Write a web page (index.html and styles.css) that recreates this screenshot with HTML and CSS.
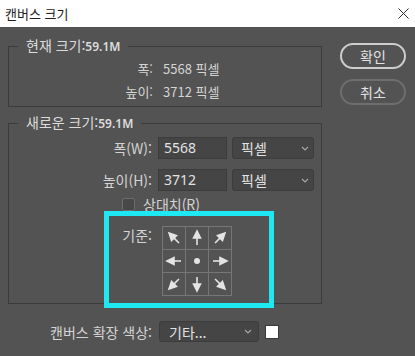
FILE: index.html
```html
<!DOCTYPE html>
<html lang="ko">
<head>
    <meta charset="UTF-8">
    <title>캔버스 크기</title>
    <link rel="stylesheet" href="styles.css">
</head>
<body>
    <svg class="defs" width="0" height="0">
        <defs>
            <g id="arrow">
                <line x1="11" y1="18" x2="11" y2="9" />
                <polygon points="11,4 7.5,11 14.5,11" />
            </g>
            <path id="chev" d="M1 1 L4 4 L7 1" />
        </defs>
    </svg>

    <!-- Title Bar -->
    <div class="titlebar">
        <span class="title">캔버스 크기</span>
        <svg class="close" width="11" height="11" viewBox="0 0 11 11">
            <path d="M0.5 0.5 L10.5 10.5 M10.5 0.5 L0.5 10.5" />
        </svg>
    </div>

    <!-- Dialog Body -->
    <div class="dialog">
        <div class="main">
            <fieldset class="group current">
                <legend>현재 크기:<span class="num">59.1M</span></legend>
                <div class="info-row">
                    <span class="label">폭:</span>
                    <span class="value">5568 픽셀</span>
                </div>
                <div class="info-row">
                    <span class="label">높이:</span>
                    <span class="value">3712 픽셀</span>
                </div>
            </fieldset>

            <fieldset class="group new-size">
                <legend>새로운 크기:<span class="num">59.1M</span></legend>
                <div class="field-row">
                    <span class="label">폭(W):</span>
                    <div class="input">5568</div>
                    <div class="select unit">
                        <span>픽셀</span>
                        <svg width="8" height="5" viewBox="0 0 8 5"><use href="#chev" /></svg>
                    </div>
                </div>
                <div class="field-row">
                    <span class="label">높이(H):</span>
                    <div class="input">3712</div>
                    <div class="select unit">
                        <span>픽셀</span>
                        <svg width="8" height="5" viewBox="0 0 8 5"><use href="#chev" /></svg>
                    </div>
                </div>
                <div class="check-row">
                    <span class="checkbox"></span>
                    <span>상대치(R)</span>
                </div>
                <div class="anchor-row">
                    <span class="label">기준:</span>
                    <div class="anchor-grid">
                        <div class="cell"><svg viewBox="0 0 22 22"><use href="#arrow" transform="rotate(-45 11 11)" /></svg></div>
                        <div class="cell"><svg viewBox="0 0 22 22"><use href="#arrow" /></svg></div>
                        <div class="cell"><svg viewBox="0 0 22 22"><use href="#arrow" transform="rotate(45 11 11)" /></svg></div>
                        <div class="cell"><svg viewBox="0 0 22 22"><use href="#arrow" transform="rotate(-90 11 11)" /></svg></div>
                        <div class="cell"><svg viewBox="0 0 22 22"><circle cx="11" cy="11" r="3" /></svg></div>
                        <div class="cell"><svg viewBox="0 0 22 22"><use href="#arrow" transform="rotate(90 11 11)" /></svg></div>
                        <div class="cell"><svg viewBox="0 0 22 22"><use href="#arrow" transform="rotate(-135 11 11)" /></svg></div>
                        <div class="cell"><svg viewBox="0 0 22 22"><use href="#arrow" transform="rotate(180 11 11)" /></svg></div>
                        <div class="cell"><svg viewBox="0 0 22 22"><use href="#arrow" transform="rotate(135 11 11)" /></svg></div>
                    </div>
                </div>
            </fieldset>

            <div class="color-row">
                <span class="label">캔버스 확장 색상:</span>
                <div class="select ext">
                    <span>기타...</span>
                    <svg width="8" height="5" viewBox="0 0 8 5"><use href="#chev" /></svg>
                </div>
                <span class="swatch"></span>
            </div>
        </div>

        <div class="buttons">
            <button class="btn primary">확인</button>
            <button class="btn">취소</button>
        </div>

        <!-- Highlight over the anchor -->
        <div class="highlight"></div>
    </div>
</body>
</html>
```

FILE: styles.css
```css
/* Global Styles */
* {
    margin: 0;
    padding: 0;
    box-sizing: border-box;
}

:root {
    --bg-color: #535353;
    --line-color: #3b3b3b;
    --text-color: #d4d4d4;
    --field-bg: #454545;
    --cyan: #1ee8f2;
}

body {
    width: 415px;
    height: 356px;
    overflow: hidden;
    background-color: var(--bg-color);
    font-family: 'Noto Sans CJK KR', 'Noto Sans', sans-serif;
    font-size: 13px;
    color: var(--text-color);
}

.defs {
    position: absolute;
}

#arrow {
    stroke: #e4e4e4;
    stroke-width: 1.6;
    fill: #e4e4e4;
}

#chev {
    fill: none;
    stroke: #a8a8a8;
    stroke-width: 1.1;
}

/* Title Bar */
.titlebar {
    height: 27px;
    background-color: #ffffff;
    display: flex;
    align-items: center;
    justify-content: space-between;
    padding: 0 6px 1px 5px;
    color: #1e1e1e;
}

.close {
    stroke: #333;
    stroke-width: 1;
}

/* Dialog */
.dialog {
    position: relative;
    display: flex;
    padding: 10px 0 0 8px;
}

.main {
    width: 314px;
}

.group {
    border: 1px solid var(--line-color);
    min-width: 0;
}

.group legend {
    margin-left: 9px;
    padding: 0 8px;
    line-height: 16px;
    font-size: 14px;
    color: #dcdcdc;
}

.num {
    font-family: 'Noto Sans', sans-serif;
    font-size: 12px;
    font-weight: 600;
}

.label {
    text-align: right;
    flex-shrink: 0;
}

/* Current Size */
.current {
    padding: 2px 0 3px 0;
}

.info-row {
    display: flex;
    align-items: center;
    height: 23px;
}

.info-row .label {
    width: 144px;
}

.info-row .value {
    margin-left: 10px;
}

/* New Size */
.new-size {
    margin-top: 7px;
    padding: 5px 0 7px 0;
}

.field-row {
    display: flex;
    align-items: center;
    height: 22px;
    margin-bottom: 10px;
}

.field-row .label {
    width: 143px;
    font-size: 14px;
}

.input {
    width: 69px;
    height: 22px;
    margin-left: 6px;
    padding-left: 5px;
    background-color: var(--field-bg);
    border: 1px solid #3c3c3c;
    line-height: 20px;
    font-family: 'Noto Sans', sans-serif;
    font-size: 14px;
    color: #e2e2e2;
}

.select {
    display: flex;
    align-items: center;
    justify-content: space-between;
    height: 22px;
    background-color: var(--field-bg);
    border: 1px solid #3c3c3c;
    border-radius: 3px;
    font-size: 14px;
    color: #e2e2e2;
}

.unit {
    width: 82px;
    margin-left: 5px;
    padding: 0 4px 0 8px;
}

.check-row {
    display: flex;
    align-items: center;
    gap: 8px;
    height: 16px;
    margin: -5px 0 0 113px;
    font-size: 14px;
    line-height: 16px;
}

.checkbox {
    width: 13px;
    height: 13px;
    margin-top: 1px;
    border: 1px solid #6c6c6c;
    border-radius: 2px;
    background-color: #484848;
}

.anchor-row {
    display: flex;
    margin-top: 14px;
}

.anchor-row .label {
    width: 143px;
    margin-top: 1px;
    line-height: 16px;
    font-size: 14px;
}

.anchor-grid {
    display: grid;
    grid-template-columns: repeat(3, 22px);
    grid-template-rows: repeat(3, 22px);
    gap: 1px;
    margin-left: 10px;
    border: 1px solid #767676;
    background-color: #767676;
}

.cell {
    background-color: var(--bg-color);
}

.cell svg {
    display: block;
    width: 22px;
    height: 22px;
}

.cell circle {
    fill: #e4e4e4;
}

/* Bottom Row */
.color-row {
    display: flex;
    align-items: center;
    margin-top: 17px;
}

.color-row .label {
    width: 144px;
    font-size: 14px;
}

.ext {
    width: 100px;
    height: 21px;
    margin-left: 7px;
    padding: 0 6px 0 9px;
}

.swatch {
    width: 14px;
    height: 14px;
    margin-left: 6px;
    background-color: #ffffff;
    border: 1px solid #3a3a3a;
}

/* Buttons */
.buttons {
    display: flex;
    flex-direction: column;
    gap: 10px;
    margin: 6px 0 0 18px;
}

.btn {
    width: 66px;
    height: 26px;
    border: 2px solid #6e6e6e;
    border-radius: 13px;
    background-color: transparent;
    font-family: 'Noto Sans CJK KR', sans-serif;
    font-size: 14px;
    color: #e2e2e2;
}

.btn.primary {
    border-color: #cdcdcd;
}

/* Highlight */
.highlight {
    position: absolute;
    left: 104px;
    top: 184px;
    width: 170px;
    height: 97px;
    border: 5px solid var(--cyan);
}
```
